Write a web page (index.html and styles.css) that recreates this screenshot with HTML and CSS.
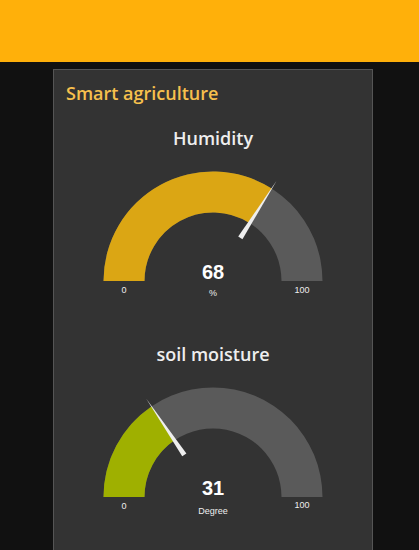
FILE: index.html
```html
<!DOCTYPE html>
<html>
<head>
<meta charset="utf-8">
<link rel="stylesheet" href="styles.css">
</head>
<body>
<header class="topbar"></header>
<main class="content">
  <section class="card">
    <h2 class="card-title">Smart agriculture</h2>
    <div class="gauge">
      <h3 class="gauge-title">Humidity</h3>
      <svg class="gauge-svg" width="318" height="186" viewBox="0 0 318 186">
        <path class="track" d="M 49.5 128 A 109.5 109.5 0 0 1 268.5 128 L 227.5 128 A 68.5 68.5 0 0 0 90.5 128 Z"/>
        <path class="fill-gold" d="M 49.5 128 A 109.5 109.5 0 0 1 217.67 35.55 L 195.70 70.17 A 68.5 68.5 0 0 0 90.5 128 Z"/>
        <polygon class="needle" points="222.76,27.53 188.44,86.28 184.22,83.60"/>
        <text class="g-value" x="159" y="126">68</text>
        <text class="g-unit" x="159" y="143">%</text>
        <text class="g-limit" x="70" y="140">0</text>
        <text class="g-limit" x="248" y="140">100</text>
      </svg>
    </div>
    <div class="gauge">
      <h3 class="gauge-title">soil moisture</h3>
      <svg class="gauge-svg" width="318" height="186" viewBox="0 0 318 186">
        <path class="track" d="M 49.5 128 A 109.5 109.5 0 0 1 268.5 128 L 227.5 128 A 68.5 68.5 0 0 0 90.5 128 Z"/>
        <path class="fill-olive" d="M 49.5 128 A 109.5 109.5 0 0 1 97.45 37.43 L 120.50 71.34 A 68.5 68.5 0 0 0 90.5 128 Z"/>
        <polygon class="needle" points="92.11,29.58 132.40,84.41 128.26,87.23"/>
        <text class="g-value" x="159" y="126">31</text>
        <text class="g-unit" x="159" y="145">Degree</text>
        <text class="g-limit" x="70" y="140">0</text>
        <text class="g-limit" x="248" y="139">100</text>
      </svg>
    </div>
  </section>
</main>
</body>
</html>
```
FILE: styles.css
```css
html, body {
  margin: 0;
  padding: 0;
  background: #111111;
  height: 100%;
  overflow: hidden;
}
body {
  font-family: "Open Sans", "Noto Sans", sans-serif;
}
.topbar {
  height: 62px;
  background: #ffb00a;
}
.content {
  padding: 7px 0 0 53px;
}
.card {
  width: 318px;
  height: 600px;
  background: #333333;
  border: 1px solid #555555;
}
.card-title {
  margin: 0;
  height: 53px;
  box-sizing: border-box;
  padding: 11px 0 0 12px;
  font-size: 18px;
  font-weight: 600;
  line-height: 24px;
  color: #f7c04d;
}
.gauge {
  height: 216px;
}
.gauge-title {
  margin: 0;
  height: 30px;
  line-height: 30px;
  text-align: center;
  font-size: 18px;
  font-weight: 600;
  color: #eeeeee;
}
.gauge-svg {
  display: block;
}
.track {
  fill: #5a5a5a;
}
.fill-gold {
  fill: #dba614;
}
.fill-olive {
  fill: #9fb000;
}
.needle {
  fill: #eeeeee;
}
.g-value {
  font-family: "Liberation Sans", Arial, sans-serif;
  font-weight: bold;
  font-size: 20px;
  fill: #ffffff;
  text-anchor: middle;
}
.g-unit {
  font-family: "Liberation Sans", Arial, sans-serif;
  font-size: 9px;
  fill: #eeeeee;
  text-anchor: middle;
}
.g-limit {
  font-family: "Liberation Sans", Arial, sans-serif;
  font-size: 9px;
  fill: #eeeeee;
  text-anchor: middle;
}
```
